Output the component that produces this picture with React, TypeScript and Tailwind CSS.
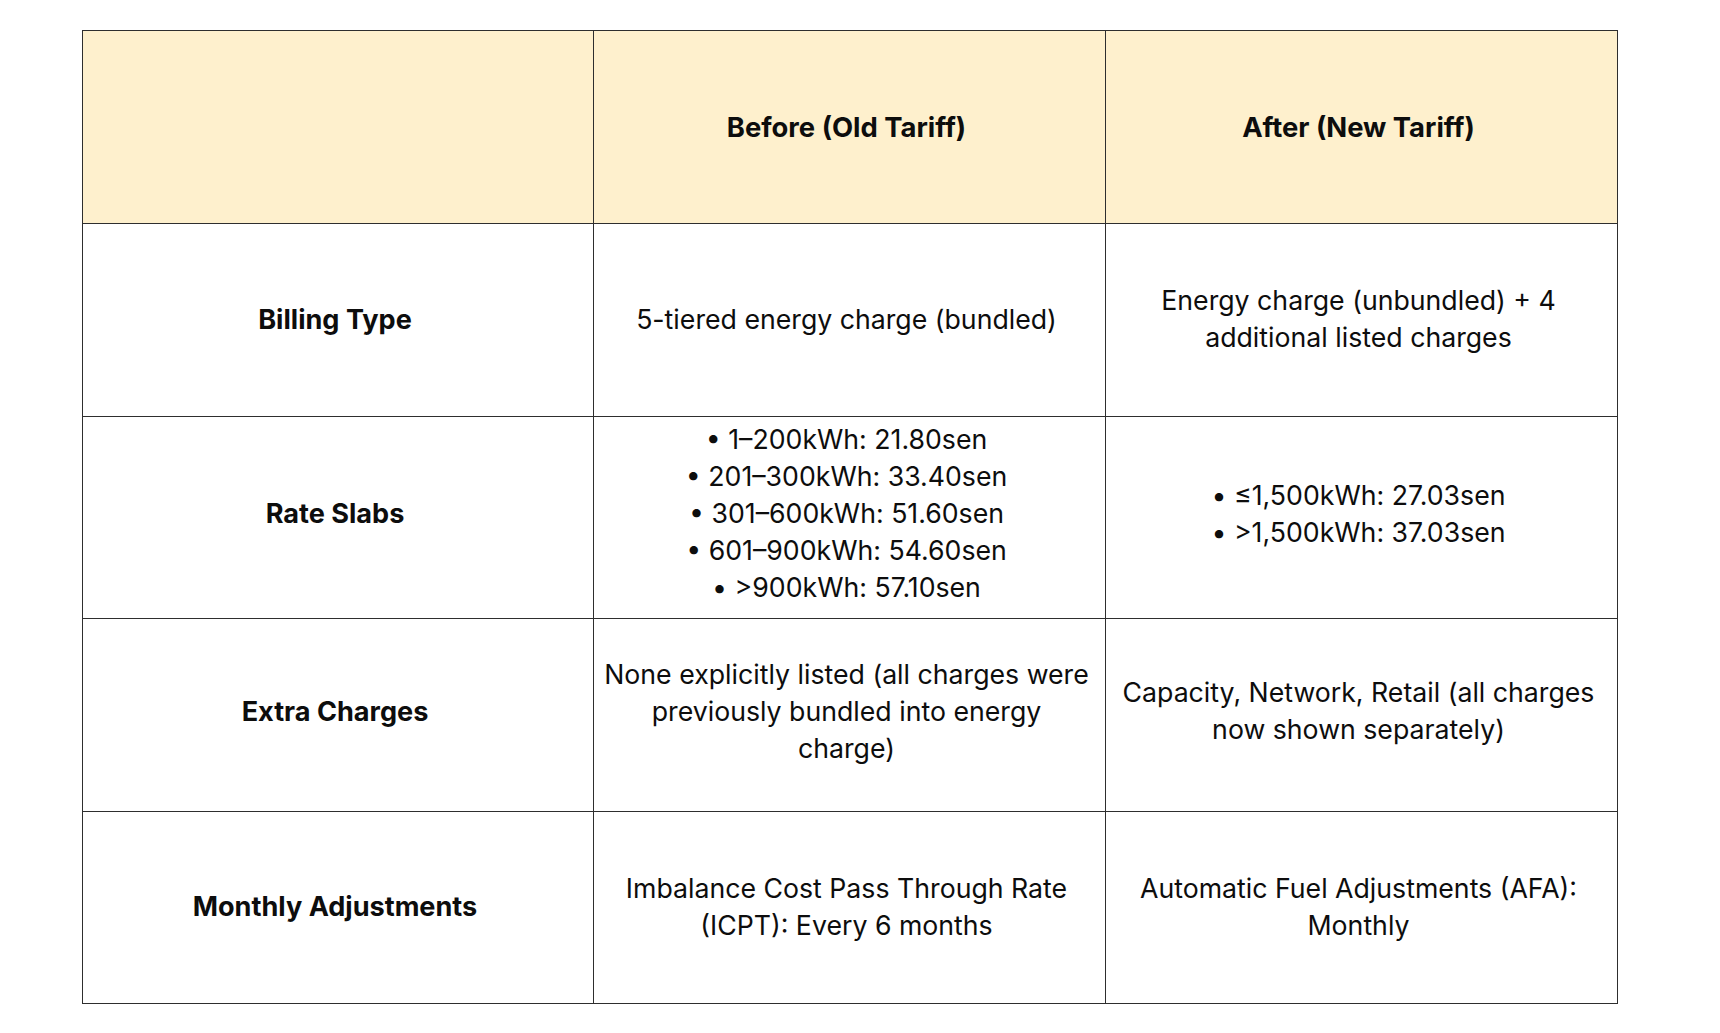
import React from "react";

const rows: { label: string; before: React.ReactNode; after: React.ReactNode; h: string; pad: string }[] = [
  {
    label: "Billing Type",
    before: "5-tiered energy charge (bundled)",
    after: "Energy charge (unbundled) + 4 additional listed charges",
    h: "h-[193px]",
    pad: "pt-[7px] pb-[9px]",
  },
  {
    label: "Rate Slabs",
    before: (
      <>
        • 1–200kWh: 21.80sen
        <br />• 201–300kWh: 33.40sen
        <br />• 301–600kWh: 51.60sen
        <br />• 601–900kWh: 54.60sen
        <br />• &gt;900kWh: 57.10sen
      </>
    ),
    after: (
      <>
        • ≤1,500kWh: 27.03sen
        <br />• &gt;1,500kWh: 37.03sen
      </>
    ),
    h: "h-[201px]",
    pad: "pt-1 pb-3",
  },
  {
    label: "Extra Charges",
    before: "None explicitly listed (all charges were previously bundled into energy charge)",
    after: "Capacity, Network, Retail (all charges now shown separately)",
    h: "h-[193px]",
    pad: "pt-1 pb-3",
  },
  {
    label: "Monthly Adjustments",
    before: "Imbalance Cost Pass Through Rate (ICPT): Every 6 months",
    after: "Automatic Fuel Adjustments (AFA): Monthly",
    h: "h-[192px]",
    pad: "pt-[7px] pb-[9px]",
  },
];

const cell = "border-[1.5px] border-[#2e2e2e] pl-[8px] pr-[14px] text-center align-middle";

export default function App() {
  return (
    <div
      className="w-[1720px] h-[1033px] bg-white pt-[30px] pl-[82px] text-[#0d0d0d]"
      style={{ fontFamily: 'Inter, "Noto Sans", sans-serif' }}
    >
      <table className="table-fixed border-collapse w-[1536px] text-[26.7px] leading-[37px]">
        <colgroup>
          <col className="w-[511px]" />
          <col className="w-[512px]" />
          <col className="w-[512px]" />
        </colgroup>
        <thead>
          <tr className="h-[193px] bg-[#fef0cd]">
            <th className={`${cell} pt-[8px] pb-[8px]`}></th>
            <th className={`${cell} pt-[8px] pb-[8px] font-bold text-[27.4px]`}>Before (Old Tariff)</th>
            <th className={`${cell} pt-[8px] pb-[8px] font-bold text-[27.4px]`}>After (New Tariff)</th>
          </tr>
        </thead>
        <tbody>
          {rows.map((r) => (
            <tr key={r.label} className={r.h}>
              <td className={`${cell} ${r.pad} font-bold text-[27.1px]`}>{r.label}</td>
              <td className={`${cell} ${r.pad}`}>{r.before}</td>
              <td className={`${cell} ${r.pad}`}>{r.after}</td>
            </tr>
          ))}
        </tbody>
      </table>
    </div>
  );
}
